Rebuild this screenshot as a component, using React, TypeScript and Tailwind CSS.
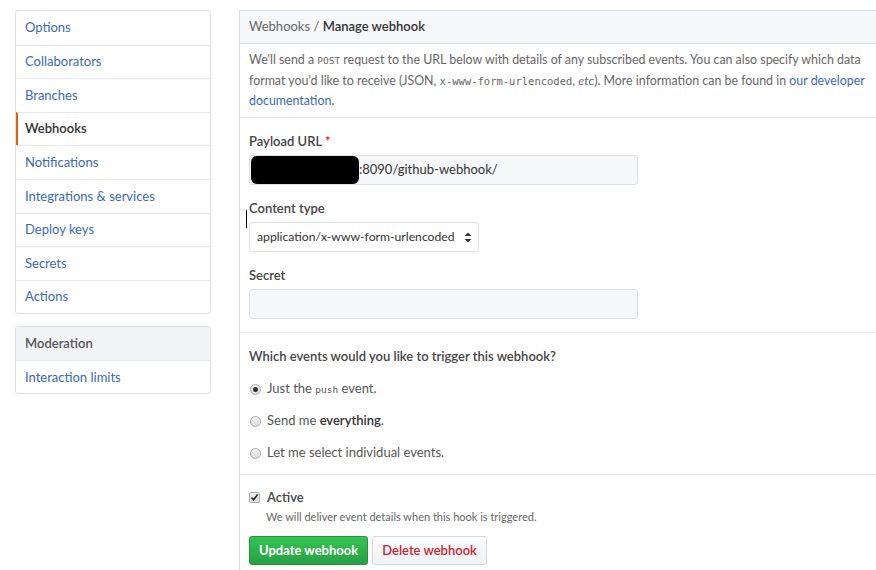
import React from "react";

// --- Constants ---

const FONT = "font-['Lato','Open_Sans',sans-serif]";
const MONO = "font-['DejaVu_Sans_Mono','Liberation_Mono',monospace]";

const SIDEBAR_ITEMS = [
    "Options",
    "Collaborators",
    "Branches",
    "Webhooks",
    "Notifications",
    "Integrations & services",
    "Deploy keys",
    "Secrets",
    "Actions",
];

const ACTIVE_ITEM = "Webhooks";


// --- Sidebar ---

function Sidebar()
{
    return (
        <div className="flex w-[196px] shrink-0 flex-col gap-[12px]">
            <nav className="overflow-hidden rounded-[3px] border border-[#dcdfe3] bg-white">
                {SIDEBAR_ITEMS.map((tItem, index) =>
                {
                    const tIsActive = tItem === ACTIVE_ITEM;
                    return (
                        <div
                            key={tItem}
                            className={
                                "flex h-[33.6px] items-center border-[#e6e8eb] pr-3 text-[13px] " +
                                (index > 0 ? "border-t " : "") +
                                (tIsActive
                                    ? "border-l-2 border-l-[#e36209] pl-[7px] font-semibold text-[#333]"
                                    : "pl-[9px] text-[#3b68b8]")
                            }
                        >
                            {tItem}
                        </div>
                    );
                })}
            </nav>

            <nav className="overflow-hidden rounded-[3px] border border-[#dcdfe3] bg-white">
                <div className="flex h-[33px] items-center bg-[#f3f4f6] pl-[9px] text-[13px] font-semibold text-[#555]">
                    Moderation
                </div>
                <div className="flex h-[33px] items-center border-t border-[#e6e8eb] pl-[9px] text-[13px] text-[#3b68b8]">
                    Interaction limits
                </div>
            </nav>
        </div>
    );
}


// --- Form pieces ---

function Label({ children }: { children: React.ReactNode })
{
    return (
        <div className="h-[22px] text-[13px] font-semibold leading-[22px] text-[#444]">
            {children}
        </div>
    );
}

function Radio({ checked, children }: { checked?: boolean; children: React.ReactNode })
{
    return (
        <div className="flex h-[32px] items-center gap-[6px] text-[13px] text-[#555]">
            <span className="ml-[1px] flex h-[11px] w-[11px] items-center justify-center rounded-full border border-[#a9a9a9] bg-gradient-to-b from-[#f2f2f2] to-[#dcdcdc]">
                {checked && <span className="h-[5px] w-[5px] rounded-full bg-[#333]" />}
            </span>
            <span>{children}</span>
        </div>
    );
}


// --- Main panel ---

function WebhookPanel()
{
    return (
        <div className="w-[680px] shrink-0 border-l border-t border-[#d8dbdf] bg-white">
            {/* Header */}
            <div className="flex h-[33px] items-center border-b border-[#dcdfe3] bg-[#f6f7f8] pl-[9px] text-[13px] text-[#666]">
                Webhooks /&nbsp;<span className="font-semibold text-[#333]">Manage webhook</span>
            </div>

            {/* Description */}
            <div className="whitespace-nowrap border-b border-[#e4e6e9] px-[9px] pb-[6px] pt-[6px] text-[12.4px] leading-[20px] text-[#666]">
                We'll send a <span className={MONO + " text-[9.5px]"}>POST</span> request to the URL below with details of any subscribed events. You can also specify which data
                <br />
                format you'd like to receive (JSON, <span className={MONO + " text-[10.5px]"}>x-www-form-urlencoded</span>, <i>etc</i>). More information can be found in <span className="text-[#3b68b8]">our developer</span>
                <br />
                <span className="text-[#3b68b8]">documentation</span>.
            </div>

            {/* Fields */}
            <div className="relative border-b border-[#e4e6e9] px-[9px] pb-[13px] pt-[12px]">
                <Label>
                    Payload URL <span className="text-[#cb2431]">*</span>
                </Label>
                <div className="mt-[3px] flex h-[30px] w-[389px] items-center rounded-[3px] border border-[#dde0e3] bg-[#f6f7f8] text-[13px] text-[#333]">
                    <span className="ml-[1px] h-[28px] w-[108px] rounded-[6px] bg-black" />
                    <span>:8090/github-webhook/</span>
                </div>

                <div className="mt-[12px]">
                    <Label>Content type</Label>
                </div>
                <div className="mt-[3px] flex h-[30px] w-[230px] items-center justify-between whitespace-nowrap rounded-[3px] border border-[#dde0e3] bg-white pl-[7px] pr-[6px] text-[12.2px] text-[#333]">
                    <span>application/x-www-form-urlencoded</span>
                    <svg className="shrink-0" width="8" height="11" viewBox="0 0 8 11">
                        <path d="M4 0.5 L7.5 4 L0.5 4 Z" fill="#333" />
                        <path d="M4 10.5 L7.5 7 L0.5 7 Z" fill="#333" />
                    </svg>
                </div>

                <div className="mt-[12px]">
                    <Label>Secret</Label>
                </div>
                <div className="mt-[3px] h-[30px] w-[389px] rounded-[3px] border border-[#dde0e3] bg-[#f6f7f8]" />

                {/* text cursor */}
                <span className="absolute left-[6px] top-[92px] h-[18px] w-[1px] bg-black" />
            </div>

            {/* Events */}
            <div className="border-b border-[#e4e6e9] px-[9px] pb-[5px] pt-[12px]">
                <div className="h-[22px] text-[13px] font-semibold leading-[22px] text-[#444]">
                    Which events would you like to trigger this webhook?
                </div>
                <div className="mt-[6px]">
                    <Radio checked>
                        Just the <span className={MONO + " text-[9.5px]"}>push</span> event.
                    </Radio>
                    <Radio>
                        Send me <span className="font-semibold text-[#333]">everything</span>.
                    </Radio>
                    <Radio>Let me select individual events.</Radio>
                </div>
            </div>

            {/* Active + actions */}
            <div className="px-[9px] pt-[13px]">
                <div className="flex items-center gap-[7px]">
                    <span className="flex h-[11px] w-[11px] items-center justify-center rounded-[2px] border border-[#a9a9a9] bg-gradient-to-b from-[#f2f2f2] to-[#dcdcdc]">
                        <svg width="9" height="9" viewBox="0 0 9 9">
                            <path d="M1.5 4.5 L3.6 6.8 L7.6 1.6" stroke="#222" strokeWidth="1.6" fill="none" />
                        </svg>
                    </span>
                    <span className="text-[13px] font-semibold text-[#444]">Active</span>
                </div>
                <div className="ml-[17px] mt-[1px] text-[11px] text-[#666]">
                    We will deliver event details when this hook is triggered.
                </div>
                <div className="mt-[11px] flex gap-[4px]">
                    <button className="h-[29px] rounded-[3px] border border-[#23913e] bg-gradient-to-b from-[#34c454] to-[#27a043] px-[9px] text-[13px] font-bold text-white">
                        Update webhook
                    </button>
                    <button className="h-[29px] rounded-[3px] border border-[#d3d6da] bg-gradient-to-b from-[#fafbfc] to-[#eff3f6] px-[9px] text-[13px] font-semibold text-[#cb2431]">
                        Delete webhook
                    </button>
                </div>
            </div>
        </div>
    );
}


// --- Page ---

export default function App()
{
    return (
        <div className={FONT + " flex h-[570px] w-[876px] gap-[28px] overflow-hidden bg-white pl-[15px] pt-[10px]"}>
            <Sidebar />
            <WebhookPanel />
        </div>
    );
}
